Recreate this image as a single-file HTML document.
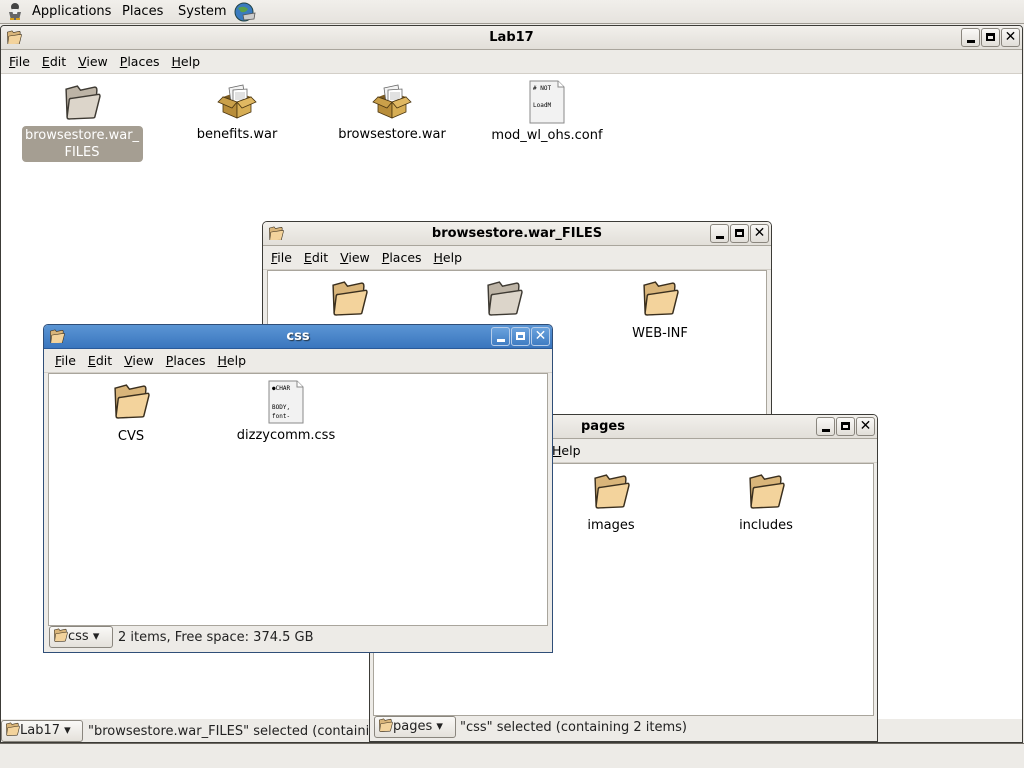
<!DOCTYPE html>
<html><head><meta charset="utf-8">
<style>
*{margin:0;padding:0;box-sizing:border-box}
body{width:1024px;height:768px;overflow:hidden;background:#edebe7;font-family:"DejaVu Sans","Liberation Sans",sans-serif;font-size:13px;color:#000;position:relative}
.abs{position:absolute}
.win{position:absolute;background:#edebe7;border:1px solid #3c3b37;border-radius:5px 5px 0 0;overflow:hidden}
.title{position:absolute;left:0;right:0;top:0;height:24px;background:linear-gradient(#f2f0ec,#e2dfd9);border-bottom:1px solid #a9a59c;font-weight:bold;text-align:center;line-height:24px;font-size:13px}
.title.act{background:linear-gradient(#5b95d4,#3a76be);color:#fff;text-shadow:1px 1px 1px #234;border-bottom:1px solid #2a5a99}
.menu{position:absolute;left:0;right:0;top:24px;height:24px;border-bottom:1px solid #d3cfc8;line-height:24px;font-size:12.5px}
.menu span{margin-left:8px;margin-right:0}
.menu u{text-decoration:underline}
.content{position:absolute;background:#fff;border:1px solid #a9a59c}
.status{position:absolute;left:0;right:0;height:26px;line-height:24px;font-size:13px;color:#222}
.btns{position:absolute;right:2px;top:2px;display:flex;gap:1px}
.btns div{width:19px;height:19px;border:1px solid #8a867e;border-radius:3px;background:linear-gradient(#faf9f7,#e1ded8);position:relative}
.btns.act div{border-color:#b7cde9;background:linear-gradient(#6aa2dd,#3f7cc3)}
.ticon{position:absolute;left:5px;top:4px}
.item{position:absolute;text-align:center;width:140px;font-size:13px}
.item svg{display:block;margin:0 auto 3px}
.combo{position:absolute;height:22px;border:1px solid #8a867e;border-radius:3px;background:linear-gradient(#faf9f7,#e4e1db);line-height:20px;padding-left:3px;font-size:13px}
</style></head><body>

<svg width="0" height="0" style="position:absolute">
<defs>
<symbol id="fold" viewBox="2 2 37 35"><path d="M5 7 L16 4 L19 8 L33 5 Q35 5 35 8 L33 32 Q33 34 31 34 L8 36 Q6 36 6 34 Z" fill="#d9b57a" stroke="#3a2f1e" stroke-width="1.4"/><path d="M10 16 L37 12 Q38 12 38 14 L33 34 Q33 35 31 35 L8 36 Q6 36 6 34 L8 18 Q8 16 10 16 Z" fill="#f3d39c" stroke="#3a2f1e" stroke-width="1.4"/></symbol>
<symbol id="foldg" viewBox="2 2 37 35"><path d="M5 7 L16 4 L19 8 L33 5 Q35 5 35 8 L33 32 Q33 34 31 34 L8 36 Q6 36 6 34 Z" fill="#bdb4a6" stroke="#3e3a33" stroke-width="1.4"/><path d="M10 16 L37 12 Q38 12 38 14 L33 34 Q33 35 31 35 L8 36 Q6 36 6 34 L8 18 Q8 16 10 16 Z" fill="#dcd5ca" stroke="#3e3a33" stroke-width="1.4"/></symbol>
<symbol id="box" viewBox="0 0 40 40"><path d="M6 15 L20 10 L34 15 L20 20 Z" fill="#7a5a20"/><path d="M12 6 L26 3 L28 18 L14 20 Z" fill="#f4f4f4" stroke="#666" stroke-width=".8"/><path d="M16 8 L30 7 L30 20 L16 21 Z" fill="#fff" stroke="#666" stroke-width=".8"/><path d="M18 11h10M18 13h10M18 15h10M18 17h9" stroke="#888" stroke-width=".6"/><path d="M6 15 L20 20 L20 36 L6 30 Z" fill="#b88d3a" stroke="#4a3510" stroke-width=".8"/><path d="M20 20 L34 15 L34 30 L20 36 Z" fill="#d7ae55" stroke="#4a3510" stroke-width=".8"/><path d="M6 15 L1 20 L15 26 L20 20 Z" fill="#caa04a" stroke="#4a3510" stroke-width=".8"/><path d="M34 15 L39 20 L25 26 L20 20 Z" fill="#e0b862" stroke="#4a3510" stroke-width=".8"/></symbol>
<symbol id="tf" viewBox="0 0 40 44"><path d="M3 1 H31 L37 7 V43 H3 Z" fill="#f2f2f2" stroke="#8a8a8a"/><path d="M31 1 V7 H37" fill="#fff" stroke="#8a8a8a"/></symbol>
</defs></svg>

<!-- top panel -->
<div class="abs" style="left:0;top:0;width:1024px;height:24px;background:linear-gradient(#f1efeb,#e6e3de);border-bottom:1px solid #9e9a92"></div>
<svg class="abs" style="left:5px;top:2px" width="20" height="20" viewBox="0 0 20 20"><circle cx="10" cy="5" r="4" fill="#444"/><path d="M4 10 L16 10 L14 18 L6 18 Z" fill="#666"/><path d="M7 7 L13 7 L12 12 L8 12Z" fill="#eee"/><path d="M5 17h4M11 17h4" stroke="#d8a020" stroke-width="2"/></svg>
<div class="abs" style="left:32px;top:4px;font-size:13px">Applications</div>
<div class="abs" style="left:122px;top:4px">Places</div>
<div class="abs" style="left:178px;top:4px">System</div>
<svg class="abs" style="left:234px;top:2px" width="22" height="20" viewBox="0 0 22 20"><circle cx="10" cy="10" r="9" fill="#3b7bbf" stroke="#244"/><path d="M4 6 Q10 3 14 7 Q12 11 7 10Z" fill="#5aa04a"/><path d="M9 13 L21 11 L20 17 L10 18Z" fill="#ccc" stroke="#555" stroke-width=".8"/></svg>

<!-- Lab17 window -->
<div class="win" style="left:0;top:25px;width:1023px;height:718px;border-radius:4px 4px 0 0">
 <div class="title">Lab17</div>
 <svg class="ticon" width="16" height="14"><use href="#fold" width="16" height="15"/></svg>
 <div class="btns"><div><i class="abs" style="left:5px;top:11px;width:8px;height:3px;background:#000"></i></div><div><i class="abs" style="left:4px;top:4px;width:9px;height:8px;border:2px solid #000;border-top-width:3px"></i></div><div style="text-align:center;font-weight:bold;line-height:17px;font-size:14px">✕</div></div>
 <div class="menu"><span><u>F</u>ile</span> <span><u>E</u>dit</span> <span><u>V</u>iew</span> <span><u>P</u>laces</span> <span><u>H</u>elp</span></div>
 <div class="content" style="left:0;top:48px;right:0;height:645px;border:none"></div>
 <div class="status" style="top:693px">
  <div class="combo" style="left:0;top:1px;width:82px"><svg width="15" height="14" style="vertical-align:-2px"><use href="#fold" width="15" height="14"/></svg>Lab17 ▾</div>
  <div class="abs" style="left:87px;top:1px">"browsestore.war_FILES" selected (containin</div>
 </div>
</div>

<!-- desktop items in Lab17 -->
<div class="abs" style="left:22px;top:126px;width:121px;height:36px;background:#a59e92;border-radius:4px"></div>
<div class="item" style="left:12px;top:84px"><svg width="38" height="36"><use href="#foldg"/></svg><div style="color:#fff;line-height:17px;margin-top:7px">browsestore.war_<br>FILES</div></div>
<div class="item" style="left:167px;top:82px"><svg width="40" height="40"><use href="#box"/></svg><div style="margin-top:5px">benefits.war</div></div>
<div class="item" style="left:322px;top:82px"><svg width="40" height="40"><use href="#box"/></svg><div style="margin-top:5px">browsestore.war</div></div>
<div class="item" style="left:477px;top:80px"><svg width="40" height="44"><use href="#tf"/><text x="6" y="10" font-size="6" font-family="DejaVu Sans Mono">#  NOT</text><text x="6" y="27" font-size="6" font-family="DejaVu Sans Mono">LoadM</text></svg><div style="margin-top:4px">mod_wl_ohs.conf</div></div>

<!-- browsestore window -->
<div class="win" style="left:262px;top:221px;width:510px;height:420px">
 <div class="title">browsestore.war_FILES</div>
 <svg class="ticon" width="16" height="14"><use href="#fold" width="16" height="15"/></svg>
 <div class="btns"><div><i class="abs" style="left:5px;top:11px;width:8px;height:3px;background:#000"></i></div><div><i class="abs" style="left:4px;top:4px;width:9px;height:8px;border:2px solid #000;border-top-width:3px"></i></div><div style="text-align:center;font-weight:bold;line-height:17px;font-size:14px">✕</div></div>
 <div class="menu"><span><u>F</u>ile</span> <span><u>E</u>dit</span> <span><u>V</u>iew</span> <span><u>P</u>laces</span> <span><u>H</u>elp</span></div>
 <div class="content" style="left:4px;top:48px;right:4px;bottom:0"></div>
 <svg class="abs" style="left:67px;top:58px" width="38" height="36"><use href="#fold"/></svg>
 <svg class="abs" style="left:222px;top:58px" width="38" height="36"><use href="#foldg"/></svg>
 <div class="item" style="left:327px;top:58px"><svg width="38" height="36"><use href="#fold"/></svg><div style="margin-top:10px">WEB-INF</div></div>
</div>

<!-- pages window -->
<div class="win" style="left:369px;top:414px;width:509px;height:328px">
 <div class="title" style="text-align:left;padding-left:211px">pages</div>
 <div class="btns"><div><i class="abs" style="left:5px;top:11px;width:8px;height:3px;background:#000"></i></div><div><i class="abs" style="left:4px;top:4px;width:9px;height:8px;border:2px solid #000;border-top-width:3px"></i></div><div style="text-align:center;font-weight:bold;line-height:17px;font-size:14px">✕</div></div>
 <div class="menu"><span style="margin-left:182px"><u>H</u>elp</span></div>
 <div class="content" style="left:3px;top:48px;right:3px;height:253px"></div>
 <div class="item" style="left:171px;top:58px"><svg width="38" height="36"><use href="#fold"/></svg><div style="margin-top:9px">images</div></div>
 <div class="item" style="left:326px;top:58px"><svg width="38" height="36"><use href="#fold"/></svg><div style="margin-top:9px">includes</div></div>
 <div class="status" style="top:301px">
  <div class="combo" style="left:4px;top:0;width:82px"><svg width="15" height="14" style="vertical-align:-2px"><use href="#fold" width="15" height="14"/></svg>pages ▾</div>
  <div class="abs" style="left:90px;top:0">"css" selected (containing 2 items)</div>
 </div>
</div>

<!-- css window -->
<div class="win" style="left:43px;top:324px;width:510px;height:329px;border-color:#2f4e78">
 <div class="title act">css</div>
 <svg class="ticon" width="16" height="14"><use href="#fold" width="16" height="15"/></svg>
 <div class="btns act"><div><i class="abs" style="left:5px;top:11px;width:8px;height:3px;background:#fff"></i></div><div><i class="abs" style="left:4px;top:4px;width:9px;height:8px;border:2px solid #fff;border-top-width:3px"></i></div><div style="text-align:center;font-weight:bold;line-height:17px;font-size:14px;color:#fff">✕</div></div>
 <div class="menu"><span style="margin-left:11px"><u>F</u>ile</span> <span><u>E</u>dit</span> <span><u>V</u>iew</span> <span><u>P</u>laces</span> <span><u>H</u>elp</span></div>
 <div class="content" style="left:4px;top:48px;right:4px;height:253px"></div>
 <div class="item" style="left:17px;top:58px"><svg width="38" height="36"><use href="#fold"/></svg><div style="margin-top:10px">CVS</div></div>
 <div class="item" style="left:172px;top:55px"><svg width="40" height="44"><use href="#tf"/><text x="6" y="10" font-size="6" font-family="DejaVu Sans Mono">●CHAR</text><text x="6" y="29" font-size="6" font-family="DejaVu Sans Mono">BODY,</text><text x="6" y="38" font-size="6" font-family="DejaVu Sans Mono">font-</text></svg><div style="margin-top:4px">dizzycomm.css</div></div>
 <div class="status" style="top:301px">
  <div class="combo" style="left:5px;top:0;width:64px"><svg width="15" height="14" style="vertical-align:-2px"><use href="#fold" width="15" height="14"/></svg>css ▾</div>
  <div class="abs" style="left:74px;top:0">2 items, Free space: 374.5 GB</div>
 </div>
</div>

<!-- bottom panel -->
<div class="abs" style="left:0;top:743px;width:1024px;height:25px;background:#edebe7;border-top:1px solid #6e6a63"></div>
</body></html>
